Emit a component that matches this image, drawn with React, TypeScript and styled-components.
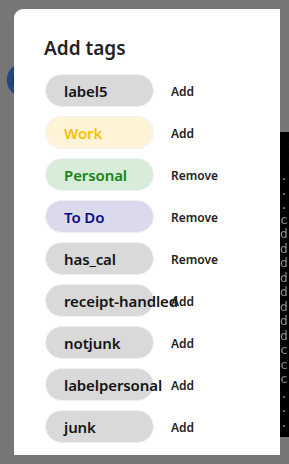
import React from "react";
import styled, { createGlobalStyle } from "styled-components";

const Global = createGlobalStyle`
  html, body { margin: 0; padding: 0; }
  body { background: #767676; font-family: "Noto Sans", "Open Sans", sans-serif; }
`;

const Page = styled.div`
  position: relative;
  width: 289px;
  height: 464px;
  overflow: hidden;
  background: #767676;
  display: grid;
  grid-template-columns: 14px 266px 9px;
  align-items: start;
`;

const BgCircle = styled.div`
  position: absolute;
  left: 7px;
  top: 63px;
  width: 34px;
  height: 34px;
  border-radius: 50%;
  background: #1e3b66;
  box-shadow: inset 0 0 0 5px #24477a;
`;

const Modal = styled.div`
  grid-column: 2;
  position: relative;
  margin-top: 9px;
  height: 446px;
  background: #fff;
  border-radius: 9px 0 0 0;
  padding: 26px 0 0 30px;
  box-sizing: border-box;
  display: flex;
  flex-direction: column;
`;

const Title = styled.h2`
  margin: 0 0 13px 0;
  font-size: 19px;
  line-height: 26px;
  font-weight: 600;
  color: #222;
`;

const List = styled.div`
  display: flex;
  flex-direction: column;
  gap: 9px;
`;

const Row = styled.div`
  display: flex;
  align-items: center;
  gap: 17px;
`;

type Tone = "gray" | "yellow" | "green" | "blue";

const tones: Record<Tone, { bg: string; fg: string }> = {
  gray: { bg: "#d9d9d9", fg: "#141414" },
  yellow: { bg: "#fff3d8", fg: "#f5c200" },
  green: { bg: "#d9ecda", fg: "#128512" },
  blue: { bg: "#dadaec", fg: "#0b0b8a" },
};

const Pill = styled.div<{ $tone: Tone }>`
  flex: none;
  width: 109px;
  height: 33px;
  box-sizing: border-box;
  margin-left: 1px;
  border-radius: 17px;
  border: 1px solid #f1f1f1;
  background: ${(p) => tones[p.$tone].bg};
  color: ${(p) => tones[p.$tone].fg};
  padding: 1px 0 0 18px;
  display: flex;
  align-items: center;
  white-space: nowrap;
  overflow: visible;
  font-size: 15px;
  font-weight: 600;
  letter-spacing: -0.1px;
`;

const Action = styled.button`
  border: none;
  background: none;
  padding: 1px 0 0 0;
  font-family: inherit;
  font-size: 12px;
  font-weight: 600;
  color: #222;
  cursor: pointer;
`;

const Terminal = styled.div`
  grid-column: 3;
  margin-top: 132px;
  height: 305px;
  background: #000;
  overflow: hidden;
  font-family: "DejaVu Sans Mono", monospace;
  font-size: 13px;
  line-height: 14.5px;
  color: #8c8c8c;
  white-space: pre;
  padding-top: 8px;
  box-sizing: border-box;
  opacity: 0.999;
  will-change: transform;
`;

const tags: { name: string; tone: Tone; action: string }[] = [
  { name: "label5", tone: "gray", action: "Add" },
  { name: "Work", tone: "yellow", action: "Add" },
  { name: "Personal", tone: "green", action: "Remove" },
  { name: "To Do", tone: "blue", action: "Remove" },
  { name: "has_cal", tone: "gray", action: "Remove" },
  { name: "receipt-handled", tone: "gray", action: "Add" },
  { name: "notjunk", tone: "gray", action: "Add" },
  { name: "labelpersonal", tone: "gray", action: "Add" },
  { name: "junk", tone: "gray", action: "Add" },
];

const termLines = [
  " *", " *", "..", "..", "..", "cc", "dc", "dc", "dc", "dc", "dc", "dc", "dc", "dc", "cc", "c:", "cc", "..",
  "..", "..", "..",
];

export default function App() {
  return (
    <>
      <Global />
      <Page>
        <BgCircle />
        <Modal>
          <Title>Add tags</Title>
          <List>
            {tags.map((t) => (
              <Row key={t.name}>
                <Pill $tone={t.tone}>{t.name}</Pill>
                <Action>{t.action}</Action>
              </Row>
            ))}
          </List>
        </Modal>
        <Terminal>{termLines.join("\n")}</Terminal>
      </Page>
    </>
  );
}
